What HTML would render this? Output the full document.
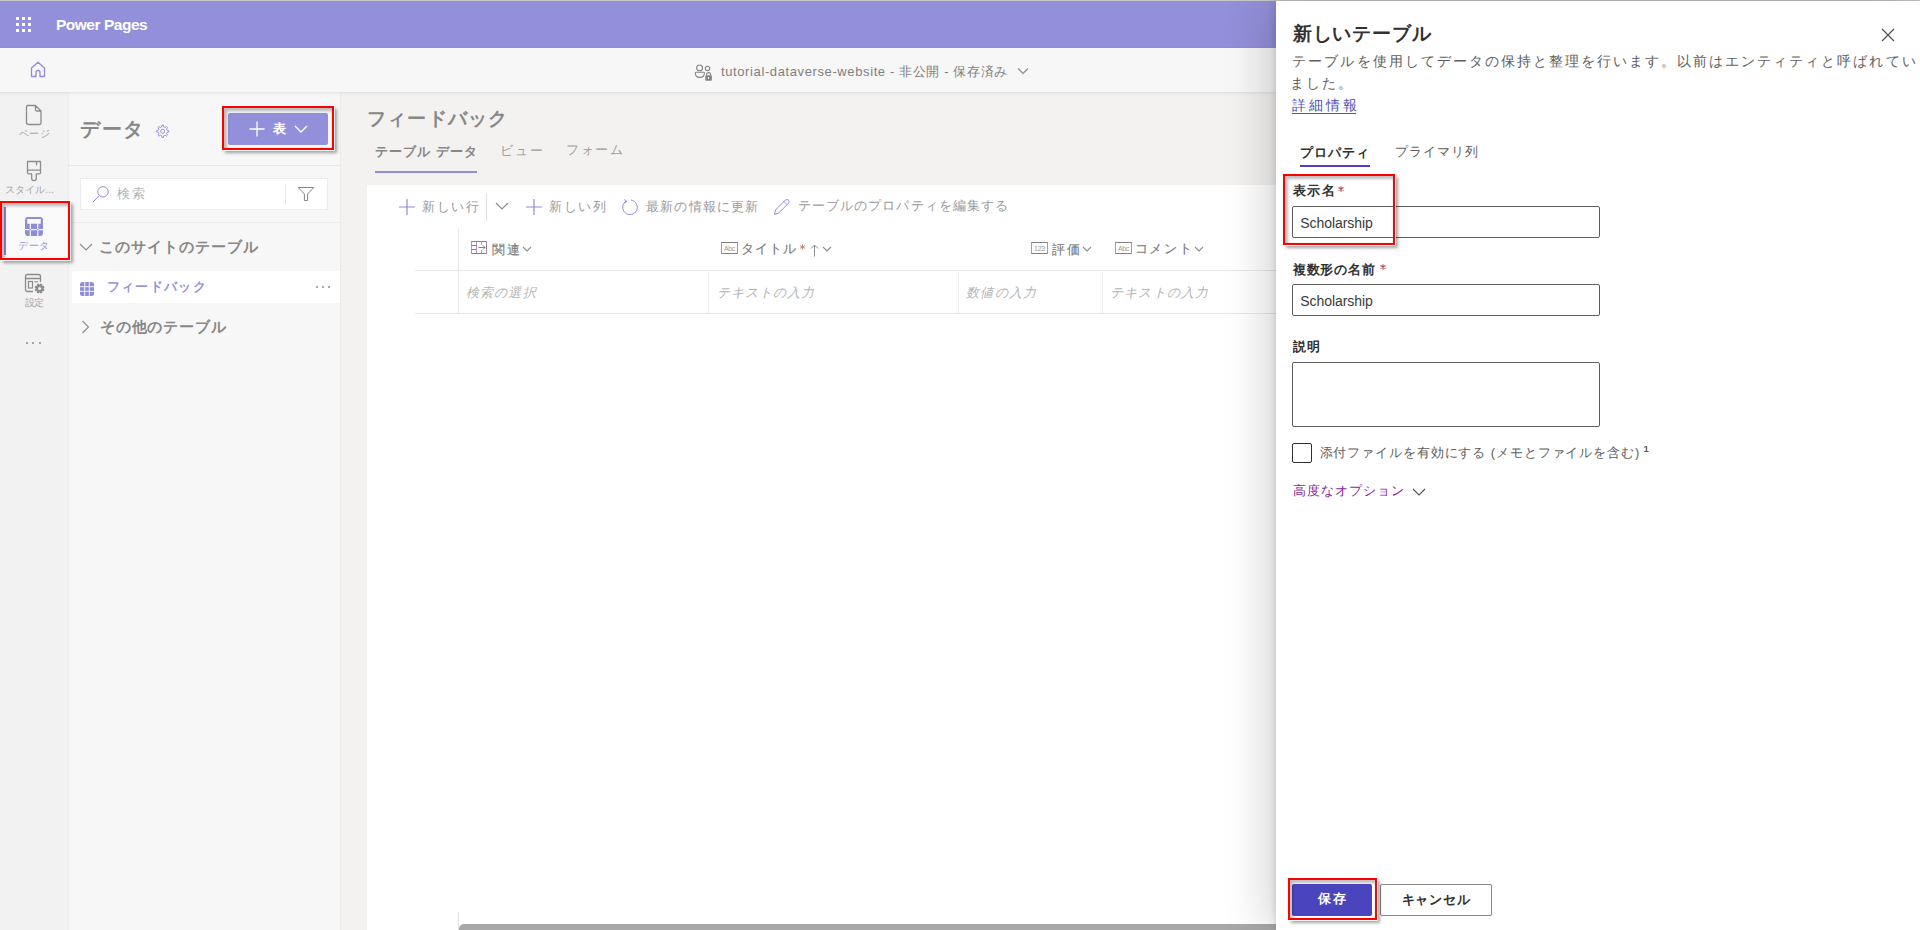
<!DOCTYPE html>
<html><head><meta charset="utf-8"><style>
html,body{margin:0;padding:0}
body{width:1920px;height:930px;overflow:hidden;position:relative;background:#f3f2f1;font-family:"Liberation Sans",sans-serif}
.t{position:absolute;white-space:pre;line-height:1}
svg{overflow:visible}
</style></head><body>
<div style="position:absolute;left:0px;top:0px;width:1920px;height:1px;background:#c9c9c9"></div><div style="position:absolute;left:0px;top:1px;width:1920px;height:47px;background:#9390db"></div><div style="position:absolute;left:0px;top:48px;width:1920px;height:44px;background:#f7f7f7;box-shadow:0 1px 3px rgba(0,0,0,0.13)"></div><div style="position:absolute;left:0px;top:92px;width:68px;height:838px;background:#f2f2f2"></div><div style="position:absolute;left:68px;top:92px;width:272px;height:838px;background:#f7f7f7"></div><div style="position:absolute;left:68px;top:92px;width:1px;height:838px;background:#ececec"></div><div style="position:absolute;left:340px;top:92px;width:1px;height:838px;background:#ebebeb"></div><div style="position:absolute;left:341px;top:92px;width:935px;height:838px;background:#f3f2f1"></div><div style="position:absolute;left:0px;top:92px;width:1920px;height:4px;background:linear-gradient(rgba(0,0,0,0.075),rgba(0,0,0,0.02) 50%,rgba(0,0,0,0))"></div><div style="position:absolute;left:16px;top:17px;width:3px;height:3px;background:#fff"></div><div style="position:absolute;left:16px;top:23px;width:3px;height:3px;background:#fff"></div><div style="position:absolute;left:16px;top:29px;width:3px;height:3px;background:#fff"></div><div style="position:absolute;left:22px;top:17px;width:3px;height:3px;background:#fff"></div><div style="position:absolute;left:22px;top:23px;width:3px;height:3px;background:#fff"></div><div style="position:absolute;left:22px;top:29px;width:3px;height:3px;background:#fff"></div><div style="position:absolute;left:28px;top:17px;width:3px;height:3px;background:#fff"></div><div style="position:absolute;left:28px;top:23px;width:3px;height:3px;background:#fff"></div><div style="position:absolute;left:28px;top:29px;width:3px;height:3px;background:#fff"></div><svg style="position:absolute;left:30px;top:61px" width="16" height="17" viewBox="0 0 16 17"><path d="M1.5,7 L8,1.2 L14.5,7 V15.5 H10 V11.5 Q10,9.3 8,9.3 Q6,9.3 6,11.5 V15.5 H1.5 Z" fill="none" stroke="#8f8cd8" stroke-width="1.3" stroke-linejoin="round"/></svg><svg style="position:absolute;left:694px;top:64px" width="19" height="18" viewBox="0 0 19 18"><circle cx="5.6" cy="3.9" r="2.9" fill="none" stroke="#858585" stroke-width="1.1"/><circle cx="13.5" cy="4.4" r="2.2" fill="none" stroke="#858585" stroke-width="1.1"/><path d="M1.3,9 Q1.3,8.3 2,8.3 H9.6 Q10.4,8.3 10.4,9.1 Q10.4,13.4 5.9,13.4 Q1.3,13.4 1.3,9 Z" fill="none" stroke="#858585" stroke-width="1.1"/><rect x="11.3" y="11.3" width="6.6" height="5.4" rx="0.8" fill="#858585"/><path d="M12.6,11.5 V10.3 Q12.6,8.6 14.6,8.6 Q16.6,8.6 16.6,10.3 V11.5" fill="none" stroke="#858585" stroke-width="1.1"/><rect x="14.1" y="13" width="1" height="2" fill="#f7f7f7"/></svg><svg style="position:absolute;left:1017px;top:67px" width="12" height="8" viewBox="0 0 12 8"><path d="M1,1.5 L6,6.5 L11,1.5" fill="none" stroke="#8a8a8a" stroke-width="1.1"/></svg><svg style="position:absolute;left:25px;top:104px" width="18" height="22" viewBox="0 0 18 22"><path d="M2.5,1.5 H10.5 L16,7 V18.5 Q16,20.5 14,20.5 H4 Q1.5,20.5 1.5,18.5 V3 Q1.5,1.5 2.5,1.5 Z M10.5,1.5 V5.5 Q10.5,7 12,7 H16" fill="none" stroke="#8c8c8c" stroke-width="1.3" stroke-linejoin="round"/></svg><svg style="position:absolute;left:26px;top:160px" width="16" height="22" viewBox="0 0 16 22"><path d="M1.5,1.5 H14.5 V12.8 Q14.5,13.8 13.5,13.8 H10.3 V18.8 Q10.3,20.6 8,20.6 Q5.7,20.6 5.7,18.8 V13.8 H2.5 Q1.5,13.8 1.5,12.8 Z M1.5,10.2 H14.5 M10.5,1.5 V5.2" fill="none" stroke="#8c8c8c" stroke-width="1.3" stroke-linejoin="round"/></svg><div style="position:absolute;left:0px;top:201px;width:70px;height:59px;background:#f9f9f9"></div><div style="position:absolute;left:4px;top:207px;width:2px;height:48px;background:#8f8cd8"></div><svg style="position:absolute;left:25px;top:217px" width="18" height="19" viewBox="0 0 18 19"><path fill-rule="evenodd" fill="#8f8cd8" d="M3,0 H15 Q18,0 18,3 V16 Q18,19 15,19 H3 Q0,19 0,16 V3 Q0,0 3,0 Z M2.2,2 V6.8 H15.8 V2 Z M4.7,6.8 V19 H5.9 V6.8 Z M12.2,6.8 V19 H13.4 V6.8 Z M0,12.1 V13.2 H18 V12.1 Z"/></svg><svg style="position:absolute;left:24px;top:273px" width="22" height="21" viewBox="0 0 22 21"><path d="M9,18.5 H3.5 Q1.5,18.5 1.5,16.5 V3.5 Q1.5,1.5 3.5,1.5 H14.5 Q16.5,1.5 16.5,3.5 V9 M1.5,5.5 H16.5" fill="none" stroke="#8c8c8c" stroke-width="1.3"/><rect x="4.5" y="8.5" width="4" height="6.5" fill="none" stroke="#8c8c8c" stroke-width="1.2"/><path d="M10.5,8.8 H14" stroke="#8c8c8c" stroke-width="1.2"/><circle cx="15.6" cy="15.5" r="6.2" fill="#f2f2f2"/><path d="M20.51,16.46 L19.75,18.29 L18.30,18.03 L18.13,18.20 L18.39,19.65 L16.56,20.41 L15.72,19.20 L15.48,19.20 L14.64,20.41 L12.81,19.65 L13.07,18.20 L12.90,18.03 L11.45,18.29 L10.69,16.46 L11.90,15.62 L11.90,15.38 L10.69,14.54 L11.45,12.71 L12.90,12.97 L13.07,12.80 L12.81,11.35 L14.64,10.59 L15.48,11.80 L15.72,11.80 L16.56,10.59 L18.39,11.35 L18.13,12.80 L18.30,12.97 L19.75,12.71 L20.51,14.54 L19.30,15.38 L19.30,15.62 Z" fill="#8c8c8c"/><circle cx="15.6" cy="15.5" r="1.5" fill="#f2f2f2"/></svg><div style="position:absolute;left:26.0px;top:342px;width:2.2px;height:2.2px;background:#8c8c8c;border-radius:50%"></div><div style="position:absolute;left:32.3px;top:342px;width:2.2px;height:2.2px;background:#8c8c8c;border-radius:50%"></div><div style="position:absolute;left:38.6px;top:342px;width:2.2px;height:2.2px;background:#8c8c8c;border-radius:50%"></div><svg style="position:absolute;left:155.5px;top:123.5px" width="15" height="16" viewBox="0 0 15 16"><g transform="scale(0.9)"><path d="M7.5,1.2 L9,1.2 L9.4,3.2 L10.8,3.9 L12.5,2.8 L13.6,3.9 L12.5,5.6 L13.1,7 L15,7.4 V8.9 L13.1,9.3 L12.5,10.7 L13.6,12.4 L12.5,13.5 L10.8,12.4 L9.4,13.1 L9,15 H7.5 L7.1,13.1 L5.7,12.4 L4,13.5 L2.9,12.4 L4,10.7 L3.4,9.3 L1.5,8.9 V7.4 L3.4,7 L4,5.6 L2.9,3.9 L4,2.8 L5.7,3.9 L7.1,3.2 Z" fill="none" stroke="#8f8cd8" stroke-width="1.0" stroke-linejoin="round" transform="translate(-0.8,0)"/><circle cx="7.45" cy="8.1" r="2.2" fill="none" stroke="#8f8cd8" stroke-width="1.0"/></g></svg><div style="position:absolute;left:228px;top:113px;width:100px;height:32px;background:#9390db;border-radius:2px"></div><svg style="position:absolute;left:249px;top:121px" width="16" height="16" viewBox="0 0 16 16"><path d="M8,0.5 V15.5 M0.5,8 H15.5" stroke="#fff" stroke-width="1.3"/></svg><svg style="position:absolute;left:294px;top:125px" width="14" height="8" viewBox="0 0 14 8"><path d="M1,1 L7,7 L13,1" fill="none" stroke="#fff" stroke-width="1.3"/></svg><div style="position:absolute;left:68px;top:165px;width:272px;height:1px;background:#e6e6e6"></div><div style="position:absolute;left:80px;top:178px;width:248px;height:32px;background:#fff;border:1px solid #ececec;box-sizing:border-box"></div><svg style="position:absolute;left:92px;top:185px" width="18" height="18" viewBox="0 0 18 18"><circle cx="11" cy="6.8" r="5.2" fill="none" stroke="#8f8cd8" stroke-width="1.0"/><path d="M7.3,10.6 L1,17" stroke="#8f8cd8" stroke-width="1.0"/></svg><div style="position:absolute;left:285px;top:184px;width:1px;height:20px;background:#e6e6e6"></div><svg style="position:absolute;left:297px;top:186px" width="18" height="16" viewBox="0 0 18 16"><path d="M1.3,1.5 H16.7 L10.6,8 V14.5 H7.4 V8 Z" fill="none" stroke="#858585" stroke-width="1.0"/></svg><div style="position:absolute;left:68px;top:222px;width:272px;height:1px;background:#ececec"></div><svg style="position:absolute;left:79px;top:243px" width="14" height="9" viewBox="0 0 14 9"><path d="M1,1 L7,7 L13,1" fill="none" stroke="#8c8c8c" stroke-width="1.1"/></svg><div style="position:absolute;left:72px;top:271px;width:268px;height:32px;background:#fff"></div><svg style="position:absolute;left:80px;top:282px" width="14" height="14" viewBox="0 0 14 14"><rect x="0" y="0" width="14" height="14" rx="2.5" fill="#8f8cd8"/><path d="M4.7,0 V14 M9.3,0 V14 M0,4.7 H14 M0,9.3 H14" stroke="#fff" stroke-width="0.9"/></svg><div style="position:absolute;left:316px;top:286px;width:2.2px;height:2.2px;background:#8c8c8c;border-radius:50%"></div><div style="position:absolute;left:322px;top:286px;width:2.2px;height:2.2px;background:#8c8c8c;border-radius:50%"></div><div style="position:absolute;left:328px;top:286px;width:2.2px;height:2.2px;background:#8c8c8c;border-radius:50%"></div><svg style="position:absolute;left:81px;top:320px" width="10" height="14" viewBox="0 0 10 14"><path d="M1.5,1 L7.5,7 L1.5,13" fill="none" stroke="#8c8c8c" stroke-width="1.1"/></svg><div style="position:absolute;left:375px;top:171px;width:102px;height:2px;background:#8f8cd8"></div><div style="position:absolute;left:367px;top:185px;width:909px;height:745px;background:#fff"></div><svg style="position:absolute;left:398px;top:198px" width="18" height="18" viewBox="0 0 18 18"><path d="M9,1 V17 M1,9 H17" stroke="#8f8cd8" stroke-width="1.2"/></svg><div style="position:absolute;left:486px;top:193px;width:1px;height:28px;background:#e1e1e1"></div><svg style="position:absolute;left:495px;top:202px" width="14" height="9" viewBox="0 0 14 9"><path d="M1,1 L7,7 L13,1" fill="none" stroke="#8c8c8c" stroke-width="1.1"/></svg><svg style="position:absolute;left:525px;top:198px" width="18" height="18" viewBox="0 0 18 18"><path d="M9,1 V17 M1,9 H17" stroke="#8f8cd8" stroke-width="1.2"/></svg><svg style="position:absolute;left:621px;top:197.5px" width="18" height="19" viewBox="0 0 18 19"><path d="M5.2,3 A7.3,7.3 0 1 0 10,2" fill="none" stroke="#8f8cd8" stroke-width="1.0"/><path d="M3.3,1.6 L5.5,2.9 L4.3,5.2" fill="none" stroke="#8f8cd8" stroke-width="1.0"/></svg><svg style="position:absolute;left:773px;top:198px" width="18" height="18" viewBox="0 0 18 18"><path d="M1.5,16.5 L2.5,12 L12.5,2 Q14,0.8 15.5,2.2 Q16.8,3.7 15.5,5.2 L5.5,15.2 Z M11,3.5 L14,6.5" fill="none" stroke="#8f8cd8" stroke-width="1.0" stroke-linejoin="round"/></svg><div style="position:absolute;left:458px;top:228px;width:1px;height:85px;background:#e8e8e8"></div><div style="position:absolute;left:415px;top:270px;width:861px;height:1px;background:#e8e8e8"></div><div style="position:absolute;left:415px;top:313px;width:861px;height:1px;background:#e8e8e8"></div><div style="position:absolute;left:708px;top:272px;width:1px;height:41px;background:#ededed"></div><div style="position:absolute;left:958px;top:272px;width:1px;height:41px;background:#ededed"></div><div style="position:absolute;left:1102px;top:272px;width:1px;height:41px;background:#ededed"></div><svg style="position:absolute;left:470px;top:240px" width="18" height="15" viewBox="0 0 18 15"><path d="M1.5,1.5 H16.5 V13.5 H1.5 Z" fill="none" stroke="#808080" stroke-width="1"/><path d="M1.5,1.5 V13.5 M6.5,1.5 V13.5 M11.5,1.5 V4.5 M11.5,10 V13.5 M16.5,1.5 V4.5 M16.5,10.5 V13.5" stroke="#b88fc8" stroke-width="1"/><path d="M1.5,5.5 H6.5 M1.5,9.5 H6.5 M8.5,7.5 H15 M13,5.5 L15,7.5 L13,9.5" fill="none" stroke="#808080" stroke-width="1"/></svg><svg style="position:absolute;left:522px;top:246px" width="10" height="7" viewBox="0 0 10 7"><path d="M1,1 L5,5 L9,1" fill="none" stroke="#8c8c8c" stroke-width="1.1"/></svg><svg style="position:absolute;left:721px;top:241.5px" width="17" height="12" viewBox="0 0 17 12"><rect x="0.5" y="0.5" width="16" height="11" fill="none" stroke="#808080" stroke-width="1"/><path d="M0.5,0.5 V11.5 M16.5,0.5 V11.5" stroke="#b88fc8" stroke-width="1"/><text x="8.5" y="8.6" font-size="7" text-anchor="middle" fill="#9a9a9a" font-family="Liberation Sans" letter-spacing="-0.3">Abc</text></svg><svg style="position:absolute;left:1031px;top:241.5px" width="17" height="12" viewBox="0 0 17 12"><rect x="0.5" y="0.5" width="16" height="11" fill="none" stroke="#808080" stroke-width="1"/><path d="M0.5,0.5 V11.5 M16.5,0.5 V11.5" stroke="#b88fc8" stroke-width="1"/><text x="8.5" y="8.6" font-size="7" text-anchor="middle" fill="#9a9a9a" font-family="Liberation Sans" letter-spacing="-0.3">123</text></svg><svg style="position:absolute;left:1115px;top:241.5px" width="17" height="12" viewBox="0 0 17 12"><rect x="0.5" y="0.5" width="16" height="11" fill="none" stroke="#808080" stroke-width="1"/><path d="M0.5,0.5 V11.5 M16.5,0.5 V11.5" stroke="#b88fc8" stroke-width="1"/><text x="8.5" y="8.6" font-size="7" text-anchor="middle" fill="#9a9a9a" font-family="Liberation Sans" letter-spacing="-0.3">Abc</text></svg><svg style="position:absolute;left:799px;top:244px" width="7" height="6" viewBox="0 0 7 6"><path d="M3.5,0.3 V5.7 M1,1.6 L6,4.4 M1,4.4 L6,1.6" stroke="#c98585" stroke-width="1"/></svg><svg style="position:absolute;left:810px;top:244px" width="9" height="13" viewBox="0 0 9 13"><path d="M4.5,12.5 V1 M1,4.5 L4.5,1 L8,4.5" fill="none" stroke="#8c8c8c" stroke-width="1"/></svg><svg style="position:absolute;left:822px;top:246px" width="10" height="7" viewBox="0 0 10 7"><path d="M1,1 L5,5 L9,1" fill="none" stroke="#8c8c8c" stroke-width="1.1"/></svg><svg style="position:absolute;left:1082px;top:246px" width="10" height="7" viewBox="0 0 10 7"><path d="M1,1 L5,5 L9,1" fill="none" stroke="#8c8c8c" stroke-width="1.1"/></svg><svg style="position:absolute;left:1194px;top:246px" width="10" height="7" viewBox="0 0 10 7"><path d="M1,1 L5,5 L9,1" fill="none" stroke="#8c8c8c" stroke-width="1.1"/></svg><div style="position:absolute;left:458px;top:912px;width:1px;height:18px;background:#e1e1e1"></div><div style="position:absolute;left:459px;top:924px;width:817px;height:6px;background:#a8a8a8;border-radius:5px 0 0 0"></div><div style="position:absolute;left:1276px;top:1px;width:644px;height:929px;background:#fff;box-shadow:-10px 0 40px rgba(0,0,0,0.17), -1px 0 6px rgba(0,0,0,0.12)"></div><svg style="position:absolute;left:1880px;top:27px" width="16" height="16" viewBox="0 0 16 16"><path d="M2,2 L14,14 M14,2 L2,14" stroke="#505050" stroke-width="1.2"/></svg><div style="position:absolute;left:1292px;top:112.5px;width:64px;height:1px;background:#4f52b2"></div><div style="position:absolute;left:1300px;top:165px;width:70px;height:2px;background:#4f3fc4"></div><svg style="position:absolute;left:1338px;top:186px" width="6" height="6" viewBox="0 0 6 6"><path d="M3,0.2 V5.8 M0.5,1.5 L5.5,4.5 M0.5,4.5 L5.5,1.5" stroke="#b84450" stroke-width="1.1"/></svg><div style="position:absolute;left:1292px;top:206px;width:308px;height:32px;border:1px solid #605e5c;border-radius:2px;box-sizing:border-box;background:#fff"></div><svg style="position:absolute;left:1380px;top:264px" width="6" height="6" viewBox="0 0 6 6"><path d="M3,0.2 V5.8 M0.5,1.5 L5.5,4.5 M0.5,4.5 L5.5,1.5" stroke="#b84450" stroke-width="1.1"/></svg><div style="position:absolute;left:1292px;top:284px;width:308px;height:32px;border:1px solid #605e5c;border-radius:2px;box-sizing:border-box;background:#fff"></div><div style="position:absolute;left:1292px;top:362px;width:308px;height:65px;border:1px solid #605e5c;border-radius:2px;box-sizing:border-box;background:#fff"></div><div style="position:absolute;left:1292px;top:443px;width:20px;height:20px;border:1px solid #323130;border-radius:2px;box-sizing:border-box;background:#fff"></div><svg style="position:absolute;left:1412px;top:488px" width="14" height="8" viewBox="0 0 14 8"><path d="M1,1 L7,7 L13,1" fill="none" stroke="#505050" stroke-width="1.1"/></svg><div style="position:absolute;left:1292px;top:884px;width:80px;height:32px;background:#4a45bf;border-radius:2px"></div><div style="position:absolute;left:1380px;top:884px;width:112px;height:32px;border:1px solid #8a8886;border-radius:2px;box-sizing:border-box;background:#fff"></div>
<div class="t" style="left:55.9px;top:17.0px;font-size:15.5px;font-weight:700;letter-spacing:-0.47px;color:#fff;">Power Pages</div><div class="t" style="left:721.0px;top:65.0px;font-size:13px;font-weight:400;letter-spacing:0.61px;color:#7f7f7f;">tutorial-dataverse-website - 非公開 - 保存済み</div><div class="t" style="left:19.0px;top:128.6px;font-size:10px;font-weight:400;letter-spacing:0.25px;color:#a6a6a6;">ページ</div><div class="t" style="left:4.5px;top:185.0px;font-size:10px;font-weight:400;letter-spacing:0.18px;color:#a6a6a6;">スタイル...</div><div class="t" style="left:18.0px;top:241.0px;font-size:10px;font-weight:400;letter-spacing:0.5px;color:#9996dc;">データ</div><div class="t" style="left:25.0px;top:298.0px;font-size:10px;font-weight:400;letter-spacing:-1.0px;color:#a6a6a6;">設定</div><div class="t" style="left:80.0px;top:119.5px;font-size:19.5px;font-weight:700;letter-spacing:1.5px;color:#878787;">データ</div><div class="t" style="left:273.0px;top:121.7px;font-size:13px;font-weight:700;letter-spacing:1.0px;color:#fff;">表</div><div class="t" style="left:116.6px;top:187.0px;font-size:13px;font-weight:400;letter-spacing:2.2px;color:#b3b3b3;">検索</div><div class="t" style="left:98.8px;top:240.0px;font-size:14.5px;font-weight:700;letter-spacing:0.98px;color:#878787;">このサイトのテーブル</div><div class="t" style="left:106.8px;top:279.5px;font-size:13px;font-weight:400;letter-spacing:1.3px;color:#8c89d6;-webkit-text-stroke:0.35px currentColor;">フィードバック</div><div class="t" style="left:99.8px;top:320.0px;font-size:14.5px;font-weight:700;letter-spacing:0.89px;color:#878787;">その他のテーブル</div><div class="t" style="left:367.0px;top:108.8px;font-size:19px;font-weight:700;letter-spacing:1.17px;color:#878787;">フィードバック</div><div class="t" style="left:375.0px;top:145.0px;font-size:13px;font-weight:700;letter-spacing:1.0px;color:#878787;">テーブル データ</div><div class="t" style="left:500.0px;top:144.0px;font-size:13px;font-weight:400;letter-spacing:1.85px;color:#9a9a9a;">ビュー</div><div class="t" style="left:566.0px;top:143.0px;font-size:13px;font-weight:400;letter-spacing:1.57px;color:#9a9a9a;">フォーム</div><div class="t" style="left:422.0px;top:200.0px;font-size:13px;font-weight:400;letter-spacing:1.67px;color:#9a9a9a;">新しい行</div><div class="t" style="left:549.0px;top:200.0px;font-size:13px;font-weight:400;letter-spacing:1.67px;color:#9a9a9a;">新しい列</div><div class="t" style="left:646.0px;top:199.6px;font-size:13px;font-weight:400;letter-spacing:1.21px;color:#9a9a9a;">最新の情報に更新</div><div class="t" style="left:798.0px;top:198.6px;font-size:13px;font-weight:400;letter-spacing:1.07px;color:#9a9a9a;">テーブルのプロパティを編集する</div><div class="t" style="left:491.5px;top:243.0px;font-size:13px;font-weight:700;letter-spacing:2.1px;color:#7a7a7a;font-weight:400;-webkit-text-stroke:0.15px currentColor;">関連</div><div class="t" style="left:740.6px;top:242.0px;font-size:13px;font-weight:700;letter-spacing:1.3px;color:#7a7a7a;font-weight:400;-webkit-text-stroke:0.15px currentColor;">タイトル</div><div class="t" style="left:1051.5px;top:243.0px;font-size:13px;font-weight:700;letter-spacing:2.0px;color:#7a7a7a;font-weight:400;-webkit-text-stroke:0.15px currentColor;">評価</div><div class="t" style="left:1134.5px;top:242.0px;font-size:13px;font-weight:700;letter-spacing:1.77px;color:#7a7a7a;font-weight:400;-webkit-text-stroke:0.15px currentColor;">コメント</div><div class="t" style="left:466.0px;top:286.0px;font-size:13px;font-weight:400;font-style:italic;letter-spacing:1.15px;color:#b5b5b5;">検索の選択</div><div class="t" style="left:716.6px;top:286.0px;font-size:13px;font-weight:400;font-style:italic;letter-spacing:1.15px;color:#b5b5b5;">テキストの入力</div><div class="t" style="left:966.0px;top:286.0px;font-size:13px;font-weight:400;font-style:italic;letter-spacing:1.25px;color:#b5b5b5;">数値の入力</div><div class="t" style="left:1110.0px;top:286.0px;font-size:13px;font-weight:400;font-style:italic;letter-spacing:1.17px;color:#b5b5b5;">テキストの入力</div><div class="t" style="left:1292.8px;top:23.7px;font-size:19px;font-weight:700;letter-spacing:0.83px;color:#323130;">新しいテーブル</div><div class="t" style="left:1292.4px;top:54.0px;font-size:14px;font-weight:400;letter-spacing:2.03px;color:#605e5c;">テーブルを使用してデータの保持と整理を行います。以前はエンティティと呼ばれてい</div><div class="t" style="left:1290.4px;top:75.7px;font-size:14px;font-weight:400;letter-spacing:2.0px;color:#605e5c;">ました。</div><div class="t" style="left:1292.4px;top:98.0px;font-size:14px;font-weight:400;letter-spacing:2.87px;color:#4f52b2;">詳細情報</div><div class="t" style="left:1300.3px;top:145.5px;font-size:13px;font-weight:700;letter-spacing:1.05px;color:#323130;">プロパティ</div><div class="t" style="left:1394.5px;top:144.5px;font-size:13px;font-weight:400;letter-spacing:1.18px;color:#605e5c;">プライマリ列</div><div class="t" style="left:1292.5px;top:184.0px;font-size:13px;font-weight:700;letter-spacing:1.75px;color:#323130;">表示名</div><div class="t" style="left:1300.3px;top:215.7px;font-size:14px;font-weight:400;letter-spacing:-0.07px;color:#3a3938;">Scholarship</div><div class="t" style="left:1292.7px;top:262.7px;font-size:13px;font-weight:700;letter-spacing:0.86px;color:#323130;">複数形の名前</div><div class="t" style="left:1300.3px;top:293.7px;font-size:14px;font-weight:400;letter-spacing:-0.07px;color:#3a3938;">Scholarship</div><div class="t" style="left:1292.7px;top:340.0px;font-size:13px;font-weight:700;letter-spacing:1.1px;color:#323130;">説明</div><div class="t" style="left:1319.6px;top:445.7px;font-size:13px;font-weight:400;letter-spacing:0.89px;color:#605e5c;">添付ファイルを有効にする (メモとファイルを含む)</div><div class="t" style="left:1292.5px;top:484.0px;font-size:13px;font-weight:400;letter-spacing:1.13px;color:#8a1f98;">高度なオプション</div><div class="t" style="left:1318.0px;top:892.0px;font-size:13px;font-weight:700;letter-spacing:1.6px;color:#fff;">保存</div><div class="t" style="left:1401.5px;top:892.8px;font-size:13px;font-weight:700;letter-spacing:0.88px;color:#323130;">キャンセル</div>
<div class="t" style="left:1643.5px;top:443.5px;font-size:9.5px;font-weight:700;color:#605e5c">1</div>
<div style="position:absolute;left:0px;top:201px;width:70px;height:59px;border:2px solid #ff0000;box-sizing:border-box;box-shadow:0 0 0 1px rgba(250,255,255,0.9), 3px 3px 3px 0px rgba(0,0,0,0.35), inset 2px 2px 3px 1px rgba(0,0,0,0.25)"></div><div style="position:absolute;left:222px;top:106px;width:112px;height:44px;border:2px solid #ff0000;box-sizing:border-box;box-shadow:0 0 0 1px rgba(250,255,255,0.9), 3px 3px 3px 0px rgba(0,0,0,0.35), inset 2px 2px 3px 1px rgba(0,0,0,0.25)"></div><div style="position:absolute;left:1283px;top:174px;width:112px;height:71px;border:2px solid #ff0000;box-sizing:border-box;box-shadow:0 0 0 1px rgba(250,255,255,0.9), 3px 3px 3px 0px rgba(0,0,0,0.35), inset 2px 2px 3px 1px rgba(0,0,0,0.25)"></div><div style="position:absolute;left:1288px;top:878px;width:89px;height:42px;border:2px solid #ff0000;box-sizing:border-box;box-shadow:0 0 0 1px rgba(250,255,255,0.9), 3px 3px 3px 0px rgba(0,0,0,0.35), inset 2px 2px 3px 1px rgba(0,0,0,0.25)"></div>
</body></html>
